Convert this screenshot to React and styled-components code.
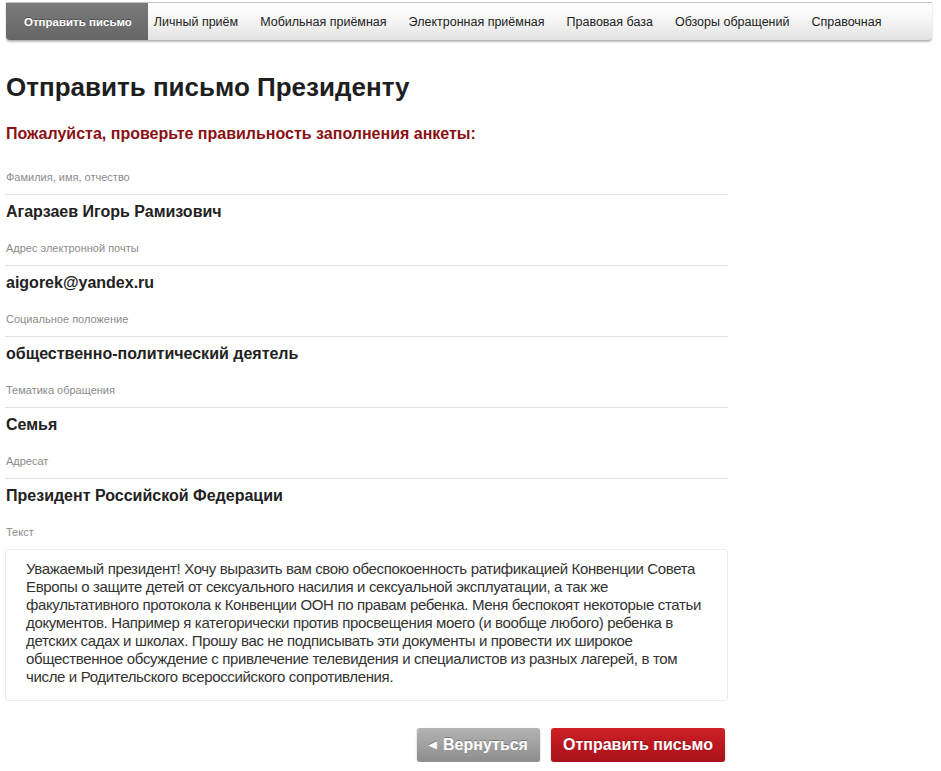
import React from 'react';
import styled, { createGlobalStyle } from 'styled-components';

const GlobalStyle = createGlobalStyle`
  body {
    margin: 0;
    background: #fff;
    font-family: "Liberation Sans", Arial, sans-serif;
  }
`;

const Page = styled.div`
  width: 941px;
  padding-top: 2px;
`;

const Nav = styled.ul`
  display: flex;
  align-items: stretch;
  list-style: none;
  margin: 0 9px 0 6px;
  padding: 0;
  height: 37px;
  border-top: 1px solid #c4c4c4;
  background: linear-gradient(#ffffff 0%, #f6f6f6 45%, #e2e2e2 100%);
  border-bottom: 1px solid #b8b8b8;
  border-radius: 0 0 4px 4px;
  box-shadow: 0 1px 2px rgba(0, 0, 0, 0.25);
`;

const Tab = styled.li`
  display: flex;
  align-items: center;
  padding: ${(p) => (p.active ? '0 16px 0 18px' : '0 11px')};
  margin-right: ${(p) => (p.active ? '-5px' : '0')};
  font-size: ${(p) => (p.active ? '11.5px' : '12.5px')};
  font-weight: ${(p) => (p.active ? 'bold' : 'normal')};
  color: ${(p) => (p.active ? '#fff' : '#222')};
  background: ${(p) => (p.active ? 'linear-gradient(#7a7a7a, #666666)' : 'transparent')};
  border-radius: ${(p) => (p.active ? '0 0 0 4px' : '0')};
  text-shadow: ${(p) => (p.active ? '0 -1px 0 rgba(0,0,0,0.35)' : 'none')};
  white-space: nowrap;
`;

const Content = styled.div`
  width: 723px;
  padding-left: 5px;
`;

const Title = styled.h1`
  margin: 31px 0 0 1px;
  font-size: 26px;
  line-height: 30px;
  font-weight: bold;
  color: #1e1e1e;
`;

const Notice = styled.h2`
  margin: 22px 0 0 1px;
  font-size: 16px;
  line-height: 20px;
  font-weight: bold;
  color: #8a1014;
`;

const Field = styled.div`
  display: flex;
  flex-direction: column;
`;

const Label = styled.div`
  margin-top: ${(p) => (p.first ? '26px' : '19px')};
  padding: 0 0 10px 1px;
  font-size: 11px;
  line-height: 14px;
  color: #8c8c8c;
`;

const Value = styled.div`
  border-top: 1px solid #e2e2e2;
  padding: 7px 0 0 1px;
  font-size: 16px;
  line-height: 20px;
  font-weight: bold;
  color: #222;
`;

const TextBox = styled.div`
  border: 1px solid #ececec;
  border-radius: 3px;
  padding: 10px 20px 16px 20px;
  font-size: 15px;
  letter-spacing: -0.35px;
  line-height: 18px;
  color: #333;
  height: 124px;
`;

const Actions = styled.div`
  display: flex;
  justify-content: flex-end;
  gap: 11px;
  margin: 27px 3px 0 0;
`;

const Button = styled.button`
  display: inline-flex;
  align-items: center;
  gap: 6px;
  height: 34px;
  padding: 0 12px;
  border: none;
  border-radius: 3px;
  font-family: "Liberation Sans", Arial, sans-serif;
  font-size: 16px;
  font-weight: bold;
  color: #fff;
  text-shadow: 0 -1px 0 rgba(0, 0, 0, 0.3);
  background: ${(p) =>
    p.primary
      ? 'linear-gradient(#cf1f26, #a8121a)'
      : 'linear-gradient(#b4b4b4, #8c8c8c)'};
  box-shadow: 0 1px 2px rgba(0, 0, 0, 0.25);
`;

const Arrow = styled.span`
  font-size: 10px;
  line-height: 1;
`;

const tabs = [
  'Отправить письмо',
  'Личный приём',
  'Мобильная приёмная',
  'Электронная приёмная',
  'Правовая база',
  'Обзоры обращений',
  'Справочная',
];

const fields = [
  ['Фамилия, имя, отчество', 'Агарзаев Игорь Рамизович'],
  ['Адрес электронной почты', 'aigorek@yandex.ru'],
  ['Социальное положение', 'общественно-политический деятель'],
  ['Тематика обращения', 'Семья'],
  ['Адресат', 'Президент Российской Федерации'],
];

const letter =
  'Уважаемый президент! Хочу выразить вам свою обеспокоенность ратификацией Конвенции Совета Европы о защите детей от сексуального насилия и сексуальной эксплуатации, а так же факультативного протокола к Конвенции ООН по правам ребенка. Меня беспокоят некоторые статьи документов. Например я категорически против просвещения моего (и вообще любого) ребенка в детских садах и школах. Прошу вас не подписывать эти документы и провести их широкое общественное обсуждение с привлечение телевидения и специалистов из разных лагерей, в том числе и Родительского всероссийского сопротивления.';

export default function App() {
  return (
    <Page>
      <GlobalStyle />
      <Nav>
        {tabs.map((t, i) => (
          <Tab key={t} active={i === 0}>
            {t}
          </Tab>
        ))}
      </Nav>
      <Content>
        <Title>Отправить письмо Президенту</Title>
        <Notice>Пожалуйста, проверьте правильность заполнения анкеты:</Notice>
        {fields.map(([label, value], i) => (
          <Field key={label}>
            <Label first={i === 0}>{label}</Label>
            <Value>{value}</Value>
          </Field>
        ))}
        <Label>Текст</Label>
        <TextBox>{letter}</TextBox>
        <Actions>
          <Button>
            <Arrow>◀</Arrow>Вернуться
          </Button>
          <Button primary>Отправить письмо</Button>
        </Actions>
      </Content>
    </Page>
  );
}
